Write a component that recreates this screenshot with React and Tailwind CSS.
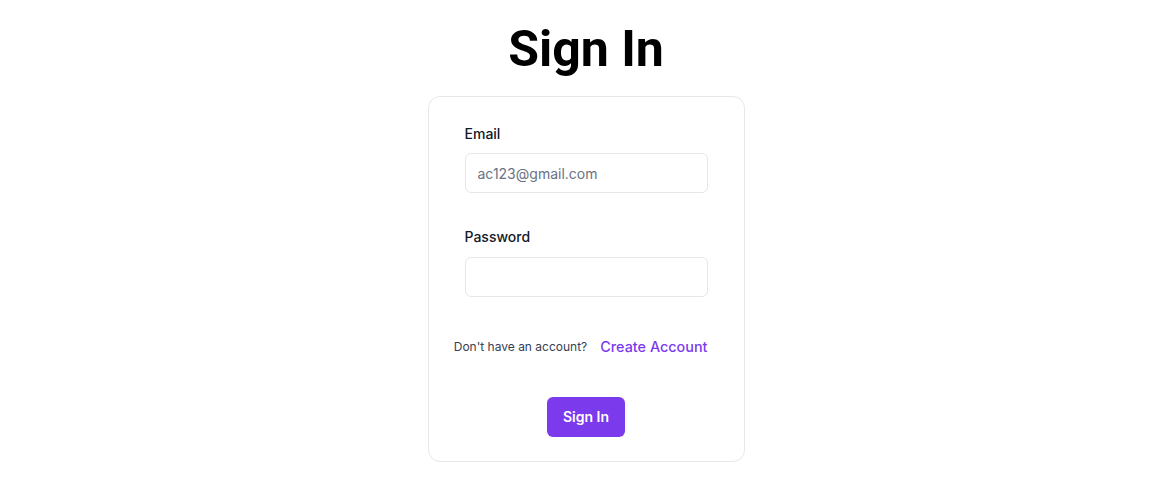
export default function App() {
  return (
    <div className="min-h-screen w-full bg-white flex flex-col items-center pl-4" style={{ fontFamily: "Inter, 'Noto Sans', sans-serif" }}>
      <h1 className="mt-[21px] text-[50px] leading-[56px] font-bold text-black" style={{ fontFamily: "Roboto, 'Noto Sans', sans-serif" }}>
        Sign In
      </h1>
      <div className="mt-[19px] w-[317px] rounded-xl border border-gray-200 bg-white pt-[27px] pb-6 px-9">
        <label className="block text-sm font-medium text-gray-900 leading-5 mb-[9px]">Email</label>
        <input
          className="block w-full h-10 rounded-md border border-gray-200 px-3 text-sm text-gray-900 placeholder:text-gray-500 outline-none"
          placeholder="ac123@gmail.com"
        />
        <label className="block text-sm font-medium text-gray-900 leading-5 mt-[34px] mb-[10px]">Password</label>
        <input type="password" className="block w-full h-10 rounded-md border border-gray-200 px-3 text-sm outline-none" />
        <div className="mt-[40px] flex items-center justify-end gap-[13px] -ml-3">
          <span className="text-xs text-gray-700">Don't have an account?</span>
          <a className="text-[14.4px] font-medium text-[#7c3aed] leading-5">Create Account</a>
        </div>
        <div className="mt-[40px] flex justify-center">
          <button className="h-10 px-4 rounded-md bg-[#7c3aed] text-white text-sm font-semibold">Sign In</button>
        </div>
      </div>
    </div>
  );
}
